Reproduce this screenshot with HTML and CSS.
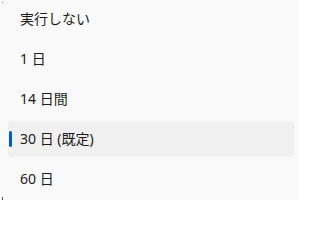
FILE: index.html
```html
<!DOCTYPE html>
<html lang="ja">
<head>
<meta charset="utf-8">
<link rel="stylesheet" href="styles.css">
</head>
<body>
<div class="menu">
  <span class="dot dot-top"></span>
  <span class="dot dot-bottom"></span>
  <div class="item">実行しない</div>
  <div class="item">1 日</div>
  <div class="item">14 日間</div>
  <div class="item selected"><span class="indicator"></span>30 日 (既定)</div>
  <div class="item">60 日</div>
</div>
</body>
</html>
```
FILE: styles.css
```css
html, body {
  margin: 0;
  padding: 0;
  background: #ffffff;
}
body {
  font-family: "Noto Sans", "Noto Sans CJK JP", sans-serif;
  font-size: 14px;
  color: #1b1b1b;
}
.menu {
  position: relative;
  width: 298px;
  height: 199px;
  padding-top: 1px;
  background: #f9f9f9;
  display: flex;
  flex-direction: column;
  gap: 4px;
}
.item {
  position: relative;
  height: 36px;
  margin-left: 8px;
  width: 286px;
  padding-left: 12px;
  box-sizing: border-box;
  display: flex;
  align-items: center;
  border-radius: 4px;
  line-height: 1;
}
.item.selected {
  background: #f0f0f0;
}
.indicator {
  position: absolute;
  left: 1px;
  top: 10px;
  width: 3px;
  height: 16px;
  border-radius: 2px;
  background: #005fb8;
}
.dot {
  position: absolute;
  background: #9a9a9a;
}
.dot-top {
  left: 2px;
  top: 2px;
  width: 1px;
  height: 1px;
}
.dot-bottom {
  left: 2px;
  top: 197px;
  width: 1px;
  height: 4px;
  background: #555;
}
```
